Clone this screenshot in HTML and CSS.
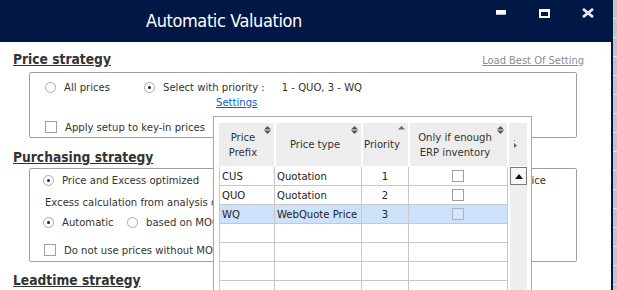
FILE: index.html
```html
<!DOCTYPE html>
<html lang="en">
<head>
    <meta charset="UTF-8">
    <title>Automatic Valuation</title>
    <link rel="stylesheet" href="styles.css">
</head>
<body>
<div class="screen">
    <div class="window">

        <!-- Title bar -->
        <div class="titlebar">
            <span class="title">Automatic Valuation</span>
            <div class="win-buttons">
                <span class="btn-min"></span>
                <span class="btn-max"></span>
                <svg class="btn-close" width="12" height="10" viewBox="0 0 12 10">
                    <path d="M1 1 L11 9 M11 1 L1 9" stroke="#fff" stroke-width="2.6"/>
                    <path d="M1 1 L11 9 M11 1 L1 9" stroke="#c9ccd4" stroke-width="0.8"/>
                </svg>
            </div>
        </div>

        <div class="content">
            <!-- Price strategy -->
            <div class="section-head">
                <h2>Price strategy</h2>
                <a class="load-best">Load Best Of Setting</a>
            </div>
            <div class="box price-box">
                <div class="row">
                    <label class="opt first"><span class="radio"></span>All prices</label>
                    <label class="opt"><span class="radio on"></span>Select with priority :</label>
                    <span class="summary">1 - QUO, 3 - WQ</span>
                </div>
                <a class="settings">Settings</a>
                <label class="opt check-row"><span class="check"></span>Apply setup to key-in prices</label>
            </div>

            <!-- Purchasing strategy -->
            <div class="section-head">
                <h2>Purchasing strategy</h2>
            </div>
            <div class="box purchase-box">
                <div class="row">
                    <label class="opt"><span class="radio on"></span>Price and Excess optimized</label>
                    <span class="right-note">Lowest price</span>
                </div>
                <div class="row note">Excess calculation from analysis quantity</div>
                <div class="row">
                    <label class="opt auto"><span class="radio on"></span>Automatic</label>
                    <label class="opt"><span class="radio"></span>based on MOQ</label>
                </div>
                <label class="opt check-row"><span class="check"></span>Do not use prices without MOQ</label>
            </div>

            <!-- Leadtime strategy -->
            <div class="section-head">
                <h2>Leadtime strategy</h2>
            </div>
        </div>

        <!-- Priority settings popup -->
        <div class="popup">
            <div class="grid-head">
                <div class="hcell">Price<br>Prefix<svg class="sort" width="7" height="8" viewBox="0 0 7 8"><path d="M0 3.5 L3.5 0 L7 3.5Z M0 4.5 L3.5 8 L7 4.5Z" fill="#555"/></svg></div>
                <div class="hcell">Price type<svg class="sort" width="7" height="8" viewBox="0 0 7 8"><path d="M0 3.5 L3.5 0 L7 3.5Z M0 4.5 L3.5 8 L7 4.5Z" fill="#555"/></svg></div>
                <div class="hcell">Priority<svg class="sort" width="7" height="8" viewBox="0 0 7 8"><path d="M0 3.5 L3.5 0 L7 3.5Z" fill="#666"/></svg></div>
                <div class="hcell">Only if enough<br>ERP inventory<svg class="sort" width="7" height="8" viewBox="0 0 7 8"><path d="M0 3.5 L3.5 0 L7 3.5Z M0 4.5 L3.5 8 L7 4.5Z" fill="#555"/></svg></div>
                <div class="hcell menu"><svg width="5" height="9" viewBox="0 0 5 9"><rect x="1" y="0" width="1" height="1" fill="#888"/><path d="M1 3 L4 5.5 L1 8Z" fill="#666"/></svg></div>
            </div>
            <div class="grid-body">
                <div class="rows">
                    <div class="grow"><span>CUS</span><span>Quotation</span><span class="num">1</span><span class="cb"><i></i></span></div>
                    <div class="grow"><span>QUO</span><span>Quotation</span><span class="num">2</span><span class="cb"><i></i></span></div>
                    <div class="grow selected"><span>WQ</span><span>WebQuote Price</span><span class="num">3</span><span class="cb"><i></i></span></div>
                    <div class="grow"><span></span><span></span><span></span><span></span></div>
                    <div class="grow"><span></span><span></span><span></span><span></span></div>
                    <div class="grow"><span></span><span></span><span></span><span></span></div>
                    <div class="grow"><span></span><span></span><span></span><span></span></div>
                </div>
                <div class="vscroll">
                    <div class="scroll-up"><svg width="8" height="5" viewBox="0 0 8 5"><path d="M0 5 L4 0 L8 5Z" fill="#111"/></svg></div>
                </div>
            </div>
        </div>
    </div>
    <div class="backdrop"></div>
</div>
</body>
</html>
```

FILE: styles.css
```css
body {
    margin: 0;
    background: #c6c6c6;
    font-family: "DejaVu Sans Condensed", "DejaVu Sans", sans-serif;
    font-size: 11.2px;
    color: #333;
}

.screen {
    display: flex;
    width: 617px;
    height: 290px;
    overflow: hidden;
}

.window {
    position: relative;
    flex: none;
    width: 611px;
    background: #fff;
    border-right: 2px solid #011846;
}

.backdrop {
    flex: 1;
    background: repeating-linear-gradient(#c4c4c4 0 18px, #eaeaea 18px 19px);
}

/* Title bar */
.titlebar {
    height: 42px;
    background: #011846;
    color: #fff;
    display: flex;
    align-items: center;
}

.title {
    margin: 0 0 1px 146px;
    font-size: 18px;
    letter-spacing: -0.4px;
}

.win-buttons {
    margin-left: auto;
    align-self: flex-start;
    display: flex;
    align-items: flex-start;
    padding: 8px 17px 0 0;
}

.btn-min {
    width: 10px;
    height: 4px;
    margin-top: 2px;
    background: #fff;
    border-bottom: 1px solid #b8bcc8;
}

.btn-max {
    width: 7px;
    height: 4px;
    margin: 1px 0 0 33px;
    border: 2px solid #fff;
    border-top-width: 3px;
    background: #011846;
}

.btn-close {
    margin-left: 32px;
    margin-top: 0;
}

/* Content */
.content {
    padding: 8px 27px 0 13px;
}

.section-head {
    display: flex;
    justify-content: space-between;
    align-items: baseline;
}

.section-head h2 {
    margin: 0;
    font-size: 13.7px;
    line-height: 18px;
    font-weight: bold;
    color: #333;
    text-decoration: underline;
}

.load-best {
    font-size: 11px;
    color: #8c8c8c;
    text-decoration: underline;
}

.box {
    margin: 4px 7px 0 16px;
    border: 1px solid #a0a0a0;
    border-radius: 2px;
    padding: 0 15px;
}

.row {
    display: flex;
    align-items: center;
    height: 14px;
}

.opt {
    display: flex;
    align-items: center;
    gap: 8px;
    height: 14px;
}

.radio {
    position: relative;
    width: 11px;
    height: 11px;
    box-sizing: border-box;
    border: 1px solid #a8a8a8;
    border-radius: 50%;
    background: #fff;
}

.radio.on::after {
    content: "";
    position: absolute;
    left: 3px;
    top: 3px;
    width: 3px;
    height: 3px;
    border-radius: 50%;
    background: #222;
}

.check {
    width: 12px;
    height: 12px;
    box-sizing: border-box;
    border: 1px solid #a0a0a0;
    background: #fff;
}

/* Price box */
.price-box {
    padding-top: 7px;
    padding-bottom: 3px;
}

.price-box .first {
    width: 99px;
}

.summary {
    margin-left: 17px;
}

.settings {
    display: block;
    margin: 2px 0 0 171px;
    line-height: 14px;
    color: #0b5fd0;
    text-decoration: underline;
}

.price-box .check-row {
    margin-top: 10px;
}

/* Purchasing box */
.purchase-box {
    margin-top: 2px;
    padding: 4px 15px 4px 13px;
}

.right-note {
    margin-left: auto;
    padding-right: 15px;
}

.note {
    margin: 8px 0 0 2px;
}

.purchase-box .row + .row:not(.note) {
    margin-top: 6px;
}

.purchase-box .auto {
    width: 84px;
}

.purchase-box .check-row {
    margin: 14px 0 0 1px;
}

.purchase-box + .section-head {
    margin-top: 9px;
}

.price-box + .section-head {
    margin-top: 10px;
}

/* Popup grid */
.popup {
    position: absolute;
    left: 213px;
    top: 116px;
    width: 312px;
    height: 200px;
    padding: 6px 0 0 5px;
    background: #fff;
    border: 1px solid #a8a8a8;
    color: #222;
}

.grid-head {
    display: grid;
    grid-template-columns: 57px 87px 47px 99px 18px;
    height: 44px;
}

.hcell {
    position: relative;
    display: flex;
    align-items: center;
    justify-content: center;
    text-align: center;
    line-height: 15px;
    padding-right: 7px;
    background: #ededed;
    border-right: 2px solid #fff;
    border-bottom: 1px solid #fff;
    overflow: hidden;
    white-space: nowrap;
    color: #333;
}

.hcell .sort {
    position: absolute;
    top: 3px;
    right: 3px;
}

.hcell.menu {
    border-right: none;
    padding-right: 0;
    justify-content: flex-start;
    padding-left: 4px;
}

.grid-body {
    display: flex;
}

.rows {
    width: 291px;
}

.grow {
    display: grid;
    grid-template-columns: 56px 87px 47px 99px;
    height: 19px;
}

.grow span {
    display: flex;
    align-items: center;
    padding-left: 2px;
    white-space: nowrap;
    overflow: hidden;
    border-right: 1px solid #c8c8c8;
    border-bottom: 1px solid #c8c8c8;
}

.grow span:first-child {
    border-left: 1px solid #c8c8c8;
}

.grow .num,
.grow .cb {
    justify-content: center;
    padding-left: 0;
}

.cb i {
    width: 12px;
    height: 12px;
    box-sizing: border-box;
    border: 1px solid #a0a0a0;
    background: #fff;
}

.grow.selected span {
    background: #cde2fa;
}

.grow.selected .cb i {
    background: #d6e6f9;
    border-color: #a9b4c0;
}

.vscroll {
    width: 17px;
    height: 160px;
    background: #efefef;
}

.scroll-up {
    display: flex;
    align-items: center;
    justify-content: center;
    height: 16px;
    border: 1px solid #7a7a7a;
    background: #f7f7f7;
}
```
